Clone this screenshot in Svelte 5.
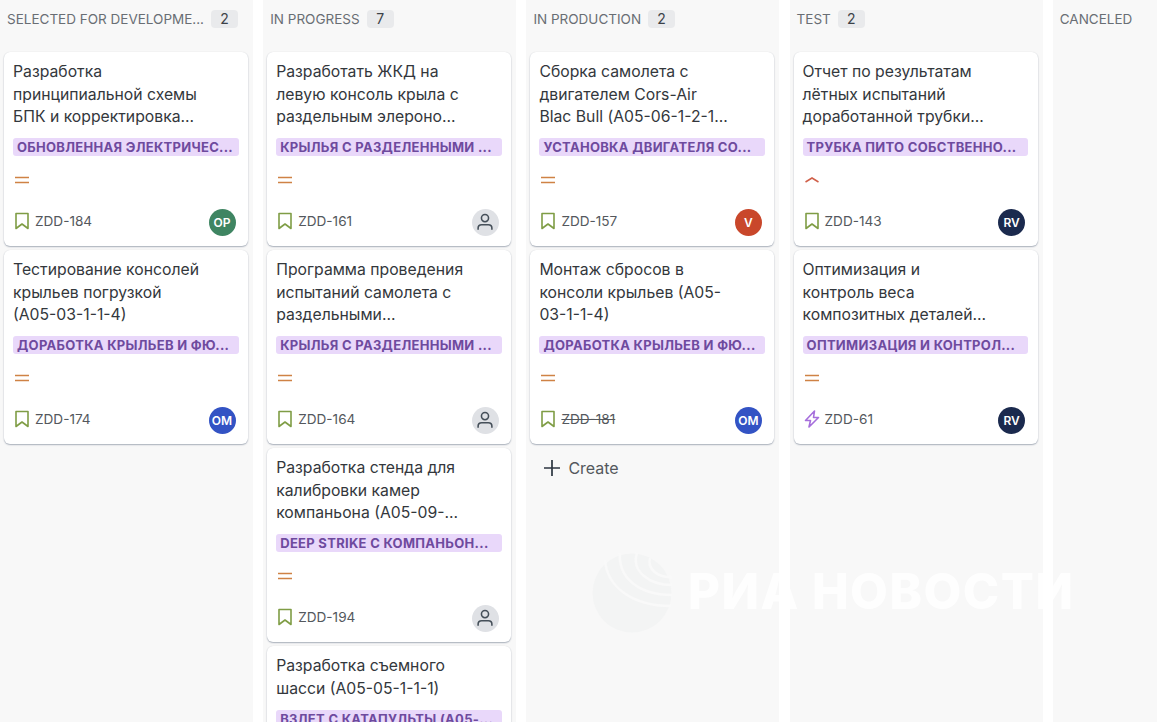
<script>
  const columns = [
    { name: 'SELECTED FOR DEVELOPME...', count: 2, cards: [
      { lines: ['Разработка', 'принципиальной схемы', 'БПК и корректировка...'], label: 'ОБНОВЛЕННАЯ ЭЛЕКТРИЧЕС...', id: 'ZDD-184', who: 'OP', color: 'green' },
      { lines: ['Тестирование консолей', 'крыльев погрузкой', '(А05-03-1-1-4)'], label: 'ДОРАБОТКА КРЫЛЬЕВ И ФЮ...', id: 'ZDD-174', who: 'OM', color: 'blue' }
    ] },
    { name: 'IN PROGRESS', count: 7, cards: [
      { lines: ['Разработать ЖКД на', 'левую консоль крыла с', 'раздельным элероно...'], label: 'КРЫЛЬЯ С РАЗДЕЛЕННЫМИ ...', id: 'ZDD-161' },
      { lines: ['Программа проведения', 'испытаний самолета с', 'раздельными...'], label: 'КРЫЛЬЯ С РАЗДЕЛЕННЫМИ ...', id: 'ZDD-164' },
      { lines: ['Разработка стенда для', 'калибровки камер', 'компаньона (А05-09-...'], label: 'DEEP STRIKE С КОМПАНЬОН...', id: 'ZDD-194' },
      { lines: ['Разработка съемного', 'шасси (А05-05-1-1-1)'], label: 'ВЗЛЕТ С КАТАПУЛЬТЫ (А05-...' }
    ] },
    { name: 'IN PRODUCTION', count: 2, create: true, cards: [
      { lines: ['Сборка самолета с', 'двигателем Cors-Air', 'Blac Bull (А05-06-1-2-1...'], label: 'УСТАНОВКА ДВИГАТЕЛЯ СО...', id: 'ZDD-157', who: 'V', color: 'red' },
      { lines: ['Монтаж сбросов в', 'консоли крыльев (А05-', '03-1-1-4)'], label: 'ДОРАБОТКА КРЫЛЬЕВ И ФЮ...', id: 'ZDD-181', who: 'OM', color: 'blue', done: true }
    ] },
    { name: 'TEST', count: 2, cards: [
      { lines: ['Отчет по результатам', 'лётных испытаний', 'доработанной трубки...'], label: 'ТРУБКА ПИТО СОБСТВЕННО...', id: 'ZDD-143', who: 'RV', color: 'navy', high: true },
      { lines: ['Оптимизация и', 'контроль веса', 'композитных деталей...'], label: 'ОПТИМИЗАЦИЯ И КОНТРОЛ...', id: 'ZDD-61', who: 'RV', color: 'navy', epic: true }
    ] },
    { name: 'CANCELED', cards: [] }
  ];
</script>

<main class="board">
  {#each columns as col}
    <section class="column">
      <header class="col-head">
        <span class="col-name">{col.name}</span>
        {#if col.count}<span class="col-count">{col.count}</span>{/if}
      </header>
      <div class="col-cards">
        {#each col.cards as card}
          <article class="card">
            <div class="title">
              {#each card.lines as line}<div>{line}</div>{/each}
            </div>
            <div class="label">{card.label}</div>
            {#if card.id}
              <div class="priority">
                {#if card.high}
                  <svg width="16" height="16" viewBox="0 0 16 16" fill="none" stroke="#d0604a" stroke-width="1.5"><path d="M1.5 10 8 6l6.500 4" /></svg>
                {:else}
                  <svg width="16" height="16" viewBox="0 0 16 16" fill="none" stroke="#cf8245" stroke-width="1.5"><path d="M1 5.500h14M1 10.500h14" /></svg>
                {/if}
              </div>
              <div class="foot">
                {#if card.epic}
                  <svg class="type" width="18" height="18" viewBox="0 0 18 18" fill="none" stroke="#a66fdc" stroke-width="1.6" stroke-linejoin="round"><path d="M11.500 1 2.500 10.500h5L6 17l9.500-9.500h-5z" /></svg>
                {:else}
                  <svg class="type" width="18" height="18" viewBox="0 0 18 18" fill="none" stroke="#7f9d45" stroke-width="1.6" stroke-linejoin="round"><path d="M3 1.500h12v15L9 12l-6 4.500z" /></svg>
                {/if}
                <span class="key" class:done={card.done}>{card.id}</span>
                {#if card.who}
                  <span class="avatar {card.color}">{card.who}</span>
                {:else}
                  <span class="avatar empty">
                    <svg width="20" height="20" viewBox="0 0 18 18" fill="none" stroke="#454f59" stroke-width="1.400"><circle cx="9" cy="5.500" r="3.200" /><path d="M2.800 16v-1.500c0-2 1.500-3 3.200-3h6c1.700 0 3.200 1 3.200 3V16" /></svg>
                  </span>
                {/if}
              </div>
            {/if}
          </article>
        {/each}
        {#if col.create}
          <div class="create">
            <svg width="18" height="18" viewBox="0 0 18 18" stroke="#2c3540" stroke-width="1.700"><path d="M9 1v16M1 9h16" /></svg>
            <span>Create</span>
          </div>
        {/if}
      </div>
    </section>
  {/each}
</main>

<div class="watermark">
  <svg width="82" height="84" viewBox="0 0 82 84" fill="none">
    <circle cx="41" cy="43" r="39.500" fill="#f3f4f4" />
    <g stroke="#f9f9f9" stroke-width="2.500">
      <path d="M14 10c2 26 26 46 66 46" />
      <path d="M29 3c-2 24 18 42 52 42" />
      <path d="M46 3c-6 18 12 32 35 32" />
      <path d="M59 8c-3 11 8 20 22 19" />
    </g>
  </svg>
  <span>РИА НОВОСТИ</span>
</div>

<style>
  :global(body) {
    margin: 0;
    background: #fff;
    overflow: hidden;
  }

  .board {
    display: flex;
    gap: 10.200px;
    height: 722px;
    overflow: hidden;
    font-family: Inter, "Noto Sans", sans-serif;
    color: #2c3540;
  }

  .column {
    flex: 0 0 253px;
    background: #f8f8f8;
    padding: 0 5px 0 4px;
    box-sizing: border-box;
  }

  .col-head {
    display: flex;
    align-items: center;
    gap: 7px;
    height: 52px;
    padding: 0 0 14px 3px;
    box-sizing: border-box;
    white-space: nowrap;
  }

  .col-name {
    font-size: 13.500px;
    color: #696e74;
  }

  .col-count {
    background: #e9eaec;
    color: #3c4248;
    font-size: 14px;
    line-height: 18px;
    min-width: 27px;
    text-align: center;
    border-radius: 4px;
  }

  .col-cards {
    display: flex;
    flex-direction: column;
    gap: 4px;
  }

  .card {
    flex: none;
    padding: 9px 9.500px 10px 9px;
    background: #fff;
    border-radius: 6px;
    box-shadow: 0 1px 1.500px rgba(9, 30, 66, 0.32), 0 0 1px rgba(9, 30, 66, 0.12);
  }

  .title {
    font-size: 15.750px;
    line-height: 22.500px;
    white-space: nowrap;
    color: #33373c;
  }

  .label {
    margin-top: 9.500px;
    height: 18px;
    line-height: 18px;
    padding: 0 4px;
    background: #e9d8fa;
    border-radius: 3px;
    color: #6e4a9e;
    font-size: 13px;
    font-weight: 700;
    letter-spacing: 0.3px;
    white-space: nowrap;
    overflow: hidden;
  }

  .priority {
    height: 16px;
    margin: 16px 0 0 1px;
    display: flex;
  }

  .foot {
    display: flex;
    align-items: center;
    margin-top: 20px;
    height: 28px;
  }

  .type {
    flex: none;
    margin-bottom: 2px;
  }

  .key {
    margin: 0 0 2px 4px;
    font-size: 13.600px;
    color: #54585d;
    flex: 1;
  }

  .key.done {
    text-decoration: line-through;
  }

  .avatar {
    width: 27px;
    height: 27px;
    margin-right: 3px;
    border-radius: 50%;
    display: flex;
    align-items: center;
    justify-content: center;
    color: #fff;
    font-size: 12px;
    font-weight: 600;
  }

  .green { background: #3f8562; }
  .blue { background: #3353c4; }
  .red { background: #c9472b; }
  .navy { background: #1b2a4e; }
  .empty { background: #dfe1e5; }

  .create {
    display: flex;
    align-items: center;
    gap: 7px;
    height: 40px;
    padding-left: 13px;
    font-size: 16px;
    color: #54585d;
  }

  .watermark {
    position: absolute;
    left: 591px;
    top: 550px;
    display: flex;
    align-items: center;
    gap: 15px;
    pointer-events: none;
  }

  .watermark span {
    font-family: Inter, sans-serif;
    font-weight: 800;
    font-size: 49px;
    letter-spacing: 1.500px;
    line-height: 84px;
    color: rgba(255, 255, 255, 0.85);
    white-space: nowrap;
  }
</style>
